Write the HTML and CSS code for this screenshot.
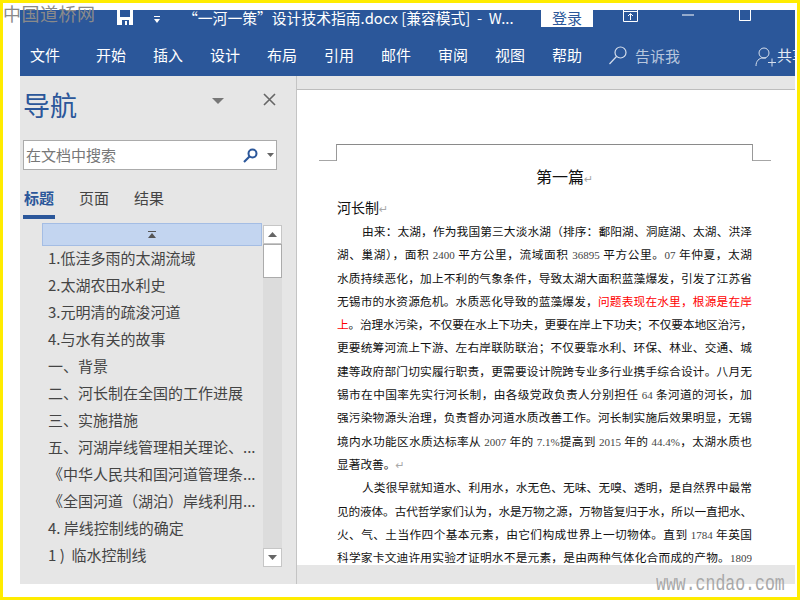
FILE: index.html
```html
<!DOCTYPE html>
<html lang="zh">
<head>
<meta charset="utf-8">
<title>Word</title>
<link rel="stylesheet" href="styles.css">
</head>
<body>
<div class="frame">
  <div class="wm-cn">中国道桥网</div>
  <div class="wm-en">www.cndao.com</div>
  <header class="ribbon">
    <div class="titlebar">
      <svg class="save" width="16" height="15" viewBox="0 0 16 15"><path fill="#fff" d="M0 0h16v15H0z"/><path fill="#2b579a" d="M3 0h10v7H3zM5 10h7v5H5z"/><path fill="#fff" d="M8 11h2v4H8z"/></svg>
      <svg class="qa" width="8" height="8" viewBox="0 0 8 8"><path fill="#fff" d="M1 0h6v1H1zM1 3h6L4 7z"/></svg>
      <div class="doc-title">“一河一策”设计技术指南.docx [兼容模式]&nbsp; -&nbsp; W...</div>
      <div class="login">登录</div>
      <svg class="win win-a" width="16" height="12" viewBox="0 0 16 12"><path fill="none" stroke="#fff" d="M.5 0v11.5h14V0M.5 1.5h14M7.5 10V4M5 6l2.500-2.500L10 6"/></svg>
      <svg class="win win-b" width="12" height="2" viewBox="0 0 12 2"><path stroke="#fff" d="M0 1h12"/></svg>
      <svg class="win win-c" width="12" height="11" viewBox="0 0 12 11"><path fill="none" stroke="#fff" d="M.5 0v10.500h11V0"/></svg>
    </div>
    <nav class="tabs">
      <span class="tab tab-file">文件</span>
      <span class="tab">开始</span>
      <span class="tab">插入</span>
      <span class="tab">设计</span>
      <span class="tab">布局</span>
      <span class="tab">引用</span>
      <span class="tab">邮件</span>
      <span class="tab">审阅</span>
      <span class="tab">视图</span>
      <span class="tab">帮助</span>
      <svg class="tell-icon" width="18" height="19" viewBox="0 0 18 19"><circle cx="11.500" cy="6.500" r="5.500" fill="none" stroke="#d5deec" stroke-width="1.200"/><path stroke="#d5deec" stroke-width="1.200" d="M7.500 10.500L.5 18"/></svg>
      <span class="tell">告诉我</span>
      <svg class="share-icon" width="21" height="20" viewBox="0 0 21 20"><circle cx="9" cy="6" r="5" fill="none" stroke="#d5deec"/><path fill="none" stroke="#d5deec" d="M1 19c0-5 3-8 7-8h3M13 15.500h8M17 11.500v8"/></svg>
      <span class="share">共享</span>
    </nav>
  </header>
  <main class="main">
    <aside class="nav">
      <div class="nav-head">
        <h1 class="nav-title">导航</h1>
        <svg class="nav-drop" width="12" height="6" viewBox="0 0 12 6"><path fill="#777" d="M0 0h12L6 6z"/></svg>
        <svg class="nav-close" width="13" height="13" viewBox="0 0 13 13"><path stroke="#666" stroke-width="1.600" d="M1 1l11 11M12 1L1 12"/></svg>
      </div>
      <div class="search">
        <span class="search-text">在文档中搜索</span>
        <svg class="search-icon" width="15" height="15" viewBox="0 0 15 15"><circle cx="9.500" cy="5.500" r="4" fill="none" stroke="#2b579a" stroke-width="2"/><path stroke="#2b579a" stroke-width="2.200" d="M6.500 8.500L1 14"/></svg>
        <svg class="search-drop" width="7" height="4" viewBox="0 0 7 4"><path fill="#666" d="M0 0h7L3.500 4z"/></svg>
      </div>
      <div class="nav-tabs">
        <span class="nav-tab active">标题</span>
        <span class="nav-tab">页面</span>
        <span class="nav-tab">结果</span>
      </div>
      <div class="tree-wrap">
        <div class="tree">
          <div class="tree-top"><svg width="8" height="7" viewBox="0 0 8 7"><path fill="#555" d="M0 0h8v1H0zM4 2l4 5H0z"/></svg></div>
          <div class="item">1.低洼多雨的太湖流域</div>
          <div class="item">2.太湖农田水利史</div>
          <div class="item">3.元明清的疏浚河道</div>
          <div class="item">4.与水有关的故事</div>
          <div class="item">一、背景</div>
          <div class="item">二、河长制在全国的工作进展</div>
          <div class="item">三、实施措施</div>
          <div class="item">五、河湖岸线管理相关理论、...</div>
          <div class="item">《中华人民共和国河道管理条...</div>
          <div class="item">《全国河道（湖泊）岸线利用...</div>
          <div class="item">4. 岸线控制线的确定</div>
          <div class="item">1 )&nbsp; 临水控制线</div>
        </div>
        <div class="scroll">
          <div class="sb-btn"><svg width="9" height="5" viewBox="0 0 9 5"><path fill="#666" d="M4.500 0L9 5H0z"/></svg></div>
          <div class="sb-thumb"></div>
          <div class="sb-track"></div>
          <div class="sb-btn"><svg width="9" height="5" viewBox="0 0 9 5"><path fill="#666" d="M0 0h9L4.500 5z"/></svg></div>
        </div>
      </div>
    </aside>
    <section class="doc">
      <div class="ruler"></div>
      <div class="page">
        <div class="crop">
          <div class="crop-side"></div>
          <div class="crop-mid"></div>
          <div class="crop-side"></div>
        </div>
        <div class="h1">第一篇<span class="ret">↵</span></div>
        <div class="h2">河长制<span class="ret">↵</span></div>
        <div class="ln first">由来：太湖，作为我国第三大淡水湖（排序：鄱阳湖、洞庭湖、太湖、洪泽</div>
        <div class="ln">湖、巢湖），面积 <i>2400</i> 平方公里，流域面积 <i>36895</i> 平方公里。<i>07</i> 年仲夏，太湖</div>
        <div class="ln">水质持续恶化，加上不利的气象条件，导致太湖大面积蓝藻爆发，引发了江苏省</div>
        <div class="ln">无锡市的水资源危机。水质恶化导致的蓝藻爆发，<span class="red">问题表现在水里，根源是在岸</span></div>
        <div class="ln tight"><span class="red">上</span>。治理水污染，不仅要在水上下功夫，更要在岸上下功夫；不仅要本地区治污，</div>
        <div class="ln">更要统筹河流上下游、左右岸联防联治；不仅要靠水利、环保、林业、交通、城</div>
        <div class="ln">建等政府部门切实履行职责，更需要设计院跨专业多行业携手综合设计。八月无</div>
        <div class="ln">锡市在中国率先实行河长制，由各级党政负责人分别担任 <i>64</i> 条河道的河长，加</div>
        <div class="ln">强污染物源头治理，负责督办河道水质改善工作。河长制实施后效果明显，无锡</div>
        <div class="ln">境内水功能区水质达标率从 <i>2007</i> 年的 <i>7.1%</i>提高到 <i>2015</i> 年的 <i>44.4%</i>，太湖水质也</div>
        <div class="ln last">显著改善。<span class="ret">↵</span></div>
        <div class="ln first">人类很早就知道水、利用水，水无色、无味、无嗅、透明，是自然界中最常</div>
        <div class="ln tight">见的液体。古代哲学家们认为，水是万物之源，万物皆复归于水，所以一直把水、</div>
        <div class="ln">火、气、土当作四个基本元素，由它们构成世界上一切物体。直到 <i>1784</i> 年英国</div>
        <div class="ln">科学家卡文迪许用实验才证明水不是元素，是由两种气体化合而成的产物。<i>1809</i></div>
      </div>
      <div class="doc-foot"></div>
    </section>
  </main>
</div>
</body>
</html>
```
FILE: styles.css
```css
* { box-sizing: border-box; }
html, body { margin: 0; padding: 0; }
body { font-family: "Noto Sans CJK SC", "Liberation Sans", sans-serif; background: #fff; }
.frame {
  position: relative;
  width: 800px;
  height: 600px;
  overflow: hidden;
  border: 3px solid #ffec00;
  padding: 7px 2px 13px 17px;
  display: flex;
  flex-direction: column;
  background: #fff;
}
.wm-cn {
  position: absolute;
  left: 0;
  top: -1px;
  font-family: "Liberation Serif", "Noto Sans CJK SC", serif;
  font-size: 18px;
  line-height: 26px;
  letter-spacing: .5px;
  color: #8a8a8a;
  z-index: 3;
}
.wm-en {
  position: absolute;
  left: 653px;
  top: 570px;
  font-family: "Liberation Mono", monospace;
  font-size: 16.500px;
  line-height: 24px;
  color: #a8a8a8;
  transform: scaleY(1.35);
  z-index: 3;
}

.ribbon { height: 66px; background: #2b579a; color: #fff; flex: none; }
.titlebar { height: 29px; display: flex; align-items: flex-start; position: relative; overflow: hidden; }
.save { margin-left: 97px; flex: none; }
.qa { margin: 6px 0 0 20px; flex: none; }
.doc-title {
  margin: -1px 0 0 22px;
  width: 358px;
  flex: none;
  font-size: 14.800px;
  line-height: 18px;
  white-space: nowrap;
}
.login {
  width: 52px;
  height: 17px;
  background: #fff;
  color: #2b579a;
  font-size: 15px;
  line-height: 15px;
  text-align: center;
  flex: none;
}
.win { flex: none; }
.win-a { margin-left: 30px; }
.win-b { margin: 4px 0 0 43px; }
.win-c { margin-left: 45px; }

.tabs { height: 37px; display: flex; align-items: center; font-size: 15px; line-height: 20px; white-space: nowrap; padding-bottom: 5px; overflow: hidden; }
.tab { width: 30px; margin-right: 27px; flex: none; }
.tab-file { margin-left: 10px; margin-right: 36px; }
.tell-icon { flex: none; }
.tell { margin-left: 8px; color: #b9c7de; width: 120px; flex: none; position: relative; top: 1px; }
.share-icon { flex: none; margin-top: 3px; }
.share { margin-left: 1px; color: #e4eaf3; flex: none; }

.main { flex: 1; display: flex; min-height: 0; }
.nav { width: 277px; flex: none; background: #e6e6e6; border-right: 1px solid #c4c4c4; display: flex; flex-direction: column; }
.nav-head { height: 52px; display: flex; align-items: center; padding-left: 3px; flex: none; padding-top: 6px; }
.nav-title { margin: 0; font-size: 27px; line-height: 36px; font-weight: 400; color: #2b579a; width: 189px; }
.nav-drop { flex: none; margin-bottom: 8px; }
.nav-close { flex: none; margin: 0 0 11px 39px; }
.search {
  height: 30px;
  margin: 12px 19px 0 3px;
  flex: none;
  width: 254px;
  background: #fff;
  border: 1px solid #ababab;
  display: flex;
  align-items: center;
  padding-left: 2px;
}
.search-text { font-size: 15px; line-height: 20px; color: #777; width: 217px; flex: none; }
.search-icon { flex: none; }
.search-drop { margin-left: 9px; flex: none; }
.nav-tabs { height: 48px; flex: none; padding: 13px 0 0 4px; display: flex; gap: 25px; }
.nav-tab { font-size: 15px; line-height: 30px; color: #444; height: 35px; position: relative; width: 30px; }
.nav-tab.active { color: #2b579a; font-weight: 700; }
.nav-tab.active::after { content: ""; position: absolute; left: -1px; width: 32px; top: 32px; height: 4px; background: #2b579a; }
.tree-wrap { display: flex; flex: 1; min-height: 0; padding-left: 22px; padding-top: 5px; }
.tree { width: 220px; flex: none; }
.tree-top { height: 23px; background: #c3d5f0; border: 1px solid #a4bde4; display: flex; align-items: center; justify-content: center; }
.tree-top svg { display: block; }
.item { height: 27px; line-height: 24px; font-size: 15px; color: #444; padding-left: 6px; white-space: nowrap; }
.scroll { width: 19px; margin: 2px 0 0 1px; height: 342px; display: flex; flex-direction: column; flex: none; }
.sb-btn { height: 19px; background: #fff; border: 1px solid #c6c6c6; display: flex; align-items: center; justify-content: center; flex: none; }
.sb-btn svg { display: block; }
.sb-thumb { height: 34px; background: #fff; border: 1px solid #ababab; flex: none; }
.sb-track { flex: 1; background: #dcdcdc; }

.doc { flex: 1; min-width: 0; display: flex; flex-direction: column; }
.ruler { height: 14px; background: #e6e6e6; border-bottom: 1px solid #bdbdbd; flex: none; }
.page { flex: 1; min-height: 0; overflow: hidden; background: #fff; padding: 54px 0 0 40px; font-family: "Liberation Serif", "Noto Sans CJK SC", serif; color: #111; }
.crop { display: flex; margin-left: -18px; height: 17px; width: 452px; }
.crop-side { width: 18px; border-bottom: 1px solid #a6a6a6; flex: none; }
.crop-side:first-child { width: 17px; }
.crop-mid { width: 417px; height: 17px; border: 1px solid #999; border-top-color: #8a8a8a; border-bottom: 0; flex: none; }
.h1 { width: 415px; text-align: center; font-size: 16px; line-height: 24px; margin-top: 5px; padding-left: 40px; }
.h2 { font-size: 14px; line-height: 22px; margin-top: 6px; }
.ret { color: #a8a8a8; font-size: 11px; font-family: "DejaVu Sans", sans-serif; }
.ln { width: 415px; height: 23.300px; line-height: 23px; font-size: 11.700px; text-align: justify; text-align-last: justify; overflow: hidden; }
.ln i { font-style: normal; font-size: 11px; color: #444; }
.tight { letter-spacing: -.25px; }
.first { padding-left: 25px; }
.last { text-align-last: left; }
.red { color: #f00; }
.doc-foot { height: 19px; background: #e6e6e6; flex: none; }
```
